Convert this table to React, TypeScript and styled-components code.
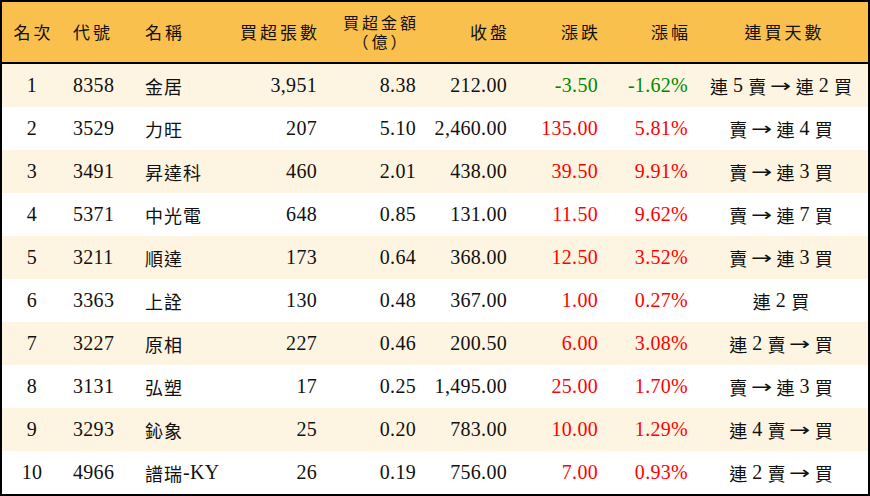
import styled, { createGlobalStyle } from "styled-components";

type Align = "left" | "right" | "center";

interface StockRow {
	rank: number;
	code: string;
	name: string;
	lots: string;
	amount: string;
	close: string;
	change: string;
	percent: string;
	streak: string;
}

const rows: StockRow[] = [
	{ rank: 1, code: "8358", name: "金居", lots: "3,951", amount: "8.38", close: "212.00", change: "-3.50", percent: "-1.62%", streak: "連 5 賣 → 連 2 買" },
	{ rank: 2, code: "3529", name: "力旺", lots: "207", amount: "5.10", close: "2,460.00", change: "135.00", percent: "5.81%", streak: "賣 → 連 4 買" },
	{ rank: 3, code: "3491", name: "昇達科", lots: "460", amount: "2.01", close: "438.00", change: "39.50", percent: "9.91%", streak: "賣 → 連 3 買" },
	{ rank: 4, code: "5371", name: "中光電", lots: "648", amount: "0.85", close: "131.00", change: "11.50", percent: "9.62%", streak: "賣 → 連 7 買" },
	{ rank: 5, code: "3211", name: "順達", lots: "173", amount: "0.64", close: "368.00", change: "12.50", percent: "3.52%", streak: "賣 → 連 3 買" },
	{ rank: 6, code: "3363", name: "上詮", lots: "130", amount: "0.48", close: "367.00", change: "1.00", percent: "0.27%", streak: "連 2 買" },
	{ rank: 7, code: "3227", name: "原相", lots: "227", amount: "0.46", close: "200.50", change: "6.00", percent: "3.08%", streak: "連 2 賣 → 買" },
	{ rank: 8, code: "3131", name: "弘塑", lots: "17", amount: "0.25", close: "1,495.00", change: "25.00", percent: "1.70%", streak: "賣 → 連 3 買" },
	{ rank: 9, code: "3293", name: "鈊象", lots: "25", amount: "0.20", close: "783.00", change: "10.00", percent: "1.29%", streak: "連 4 賣 → 買" },
	{ rank: 10, code: "4966", name: "譜瑞-KY", lots: "26", amount: "0.19", close: "756.00", change: "7.00", percent: "0.93%", streak: "連 2 賣 → 買" },
];

const isHan = (s: string) => /[\u4e00-\u9fff]/.test(s);

// split a label into Han runs and latin/digit runs so each gets its own size
const renderMixed = (text: string) =>
	text.split(/([\u4e00-\u9fff]+)/).filter(Boolean).map((part, i) =>
		isHan(part) ? <Han key={i}>{part}</Han> : <span key={i}>{part}</span>
	);

const Streak = ({ text }: { text: string }) => (
	<StreakWrap>
		{text.split(" ").map((tok, i) =>
			tok === "→" ? <Arrow key={i}>{tok}</Arrow> : isHan(tok) ? <Han key={i}>{tok}</Han> : <span key={i}>{tok}</span>
		)}
	</StreakWrap>
);

const App = () => {
	return (
		<>
			<GlobalStyle />
			<Table>
				<HeaderRow>
					<HeadCell align="center"><HeadText>名次</HeadText></HeadCell>
					<HeadCell align="left"><HeadText>代號</HeadText></HeadCell>
					<HeadCell align="left"><HeadText>名稱</HeadText></HeadCell>
					<HeadCell align="right"><HeadText>買超張數</HeadText></HeadCell>
					<HeadCell align="right">
						<HeadStack>
							<HeadText>買超金額</HeadText>
							<HeadText>（億）</HeadText>
						</HeadStack>
					</HeadCell>
					<HeadCell align="right"><HeadText>收盤</HeadText></HeadCell>
					<HeadCell align="right"><HeadText>漲跌</HeadText></HeadCell>
					<HeadCell align="right"><HeadText>漲幅</HeadText></HeadCell>
					<HeadCell align="center"><HeadText>連買天數</HeadText></HeadCell>
				</HeaderRow>
				{rows.map((row, i) => {
					const tone = row.change.startsWith("-") ? "down" : "up";
					return (
						<BodyRow key={row.code} striped={i % 2 === 0}>
							<Cell align="center">{row.rank}</Cell>
							<Cell align="left">{row.code}</Cell>
							<Cell align="left">{renderMixed(row.name)}</Cell>
							<Cell align="right">{row.lots}</Cell>
							<Cell align="right">{row.amount}</Cell>
							<Cell align="right">{row.close}</Cell>
							<Cell align="right" tone={tone}>{row.change}</Cell>
							<Cell align="right" tone={tone}>{row.percent}</Cell>
							<Cell align="center" shift={-4}><Streak text={row.streak} /></Cell>
						</BodyRow>
					);
				})}
			</Table>
		</>
	);
};

export default App;

const GlobalStyle = createGlobalStyle`
	html, body {
		margin: 0;
		padding: 0;
		background: #ffffff;
	}
	body {
		font-family: "Liberation Serif", "Noto Sans CJK TC", serif;
	}
`;

const columns = "60px 72px 96px 97px 99px 91px 91px 90px 170px";

const justify = (a: Align) => (a === "left" ? "flex-start" : a === "right" ? "flex-end" : "center");
const pad = (a: Align) => (a === "left" ? "0 0 0 11px" : a === "right" ? "0 10px 0 0" : "0");

const Table = styled.div`
	width: 870px;
	height: 496px;
	box-sizing: border-box;
	border: 2px solid #000;
	display: flex;
	flex-direction: column;
`;

const HeaderRow = styled.div`
	display: grid;
	grid-template-columns: ${columns};
	height: 60px;
	background: #f9c04e;
	border-bottom: 2px solid #000;
`;

const HeadCell = styled.div<{ align: Align }>`
	display: flex;
	align-items: center;
	justify-content: ${(p) => justify(p.align)};
	padding: ${(p) => pad(p.align)};
	color: #111;
`;

const HeadText = styled.span`
	font-family: "Noto Sans CJK TC", sans-serif;
	font-size: 17px;
	line-height: 18px;
	letter-spacing: 3px;
	margin-right: -3px;
`;

const HeadStack = styled.div`
	display: flex;
	flex-direction: column;
	align-items: center;
	gap: 3px;
	margin-top: -2px;

	${HeadText} {
		font-size: 16px;
		line-height: 16px;
	}
`;

const BodyRow = styled.div<{ striped: boolean }>`
	display: grid;
	grid-template-columns: ${columns};
	height: 43px;
	background: ${(p) => (p.striped ? "#fdf5e1" : "#ffffff")};
`;

const Cell = styled.div<{ align: Align; tone?: "up" | "down"; shift?: number }>`
	display: flex;
	align-items: center;
	justify-content: ${(p) => justify(p.align)};
	padding: ${(p) => pad(p.align)};
	margin-left: ${(p) => p.shift ?? 0}px;
	font-size: 20px;
	letter-spacing: 0.3px;
	white-space: pre;
	color: ${(p) => (p.tone === "up" ? "#ff0000" : p.tone === "down" ? "#008a00" : "#111111")};
`;

const Han = styled.span`
	font-family: "Noto Sans CJK TC", sans-serif;
	font-size: 18px;
	letter-spacing: 1px;
`;

const StreakWrap = styled.span`
	display: inline-flex;
	align-items: center;
	gap: 5px;

	${Han} {
		letter-spacing: 0;
	}
`;

const Arrow = styled.span`
	font-family: "DejaVu Sans", sans-serif;
	font-size: 18px;
	display: inline-block;
	transform: scaleX(1.4);
	margin: 0 2px;
`;
